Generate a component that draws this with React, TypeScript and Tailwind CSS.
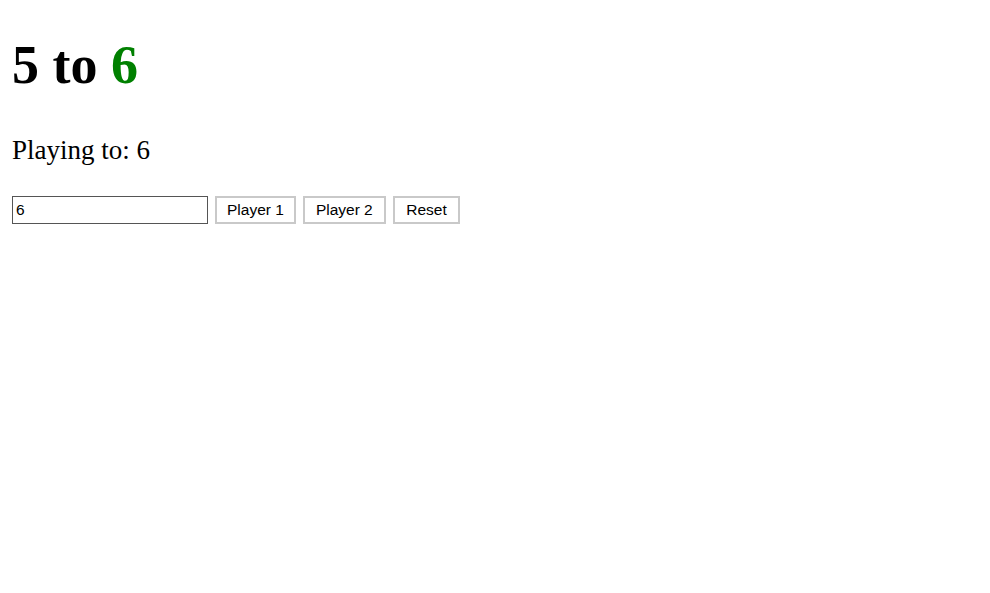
import { useState } from "react";

export default function App() {
  const [target, setTarget] = useState("6");
  const [p1, setP1] = useState(5);
  const [p2, setP2] = useState(6);

  return (
    <div className="min-h-screen bg-white px-[12px] pt-[38px] text-black">
      <h1 className="text-[54px] font-bold leading-none font-['Liberation_Serif',serif]">
        <span>{p1}</span> to <span className="text-[#008000]">{p2}</span>
      </h1>
      <p className="mt-[45px] text-[27px] leading-none font-['Liberation_Serif',serif]">
        Playing to: {target}
      </p>
      <div className="mt-[32px] flex items-center gap-[7px] font-['Liberation_Sans',Arial,sans-serif] text-[15.5px]">
        <input
          value={target}
          onChange={e => setTarget(e.target.value)}
          className="h-[28px] w-[196px] border border-[#555555] bg-white px-[3px] text-[15.5px] text-black outline-none"
        />
        <button
          onClick={() => setP1(p1 + 1)}
          className="flex h-[28px] items-center border-2 border-[#c9c9c9] bg-white px-[10px] leading-none"
        >
          Player 1
        </button>
        <button
          onClick={() => setP2(p2 + 1)}
          className="flex h-[28px] items-center border-2 border-[#c9c9c9] bg-white px-[11px] leading-none"
        >
          Player 2
        </button>
        <button
          onClick={() => {
            setP1(0);
            setP2(0);
          }}
          className="flex h-[28px] items-center border-2 border-[#c9c9c9] bg-white px-[11.5px] leading-none"
        >
          Reset
        </button>
      </div>
    </div>
  );
}
